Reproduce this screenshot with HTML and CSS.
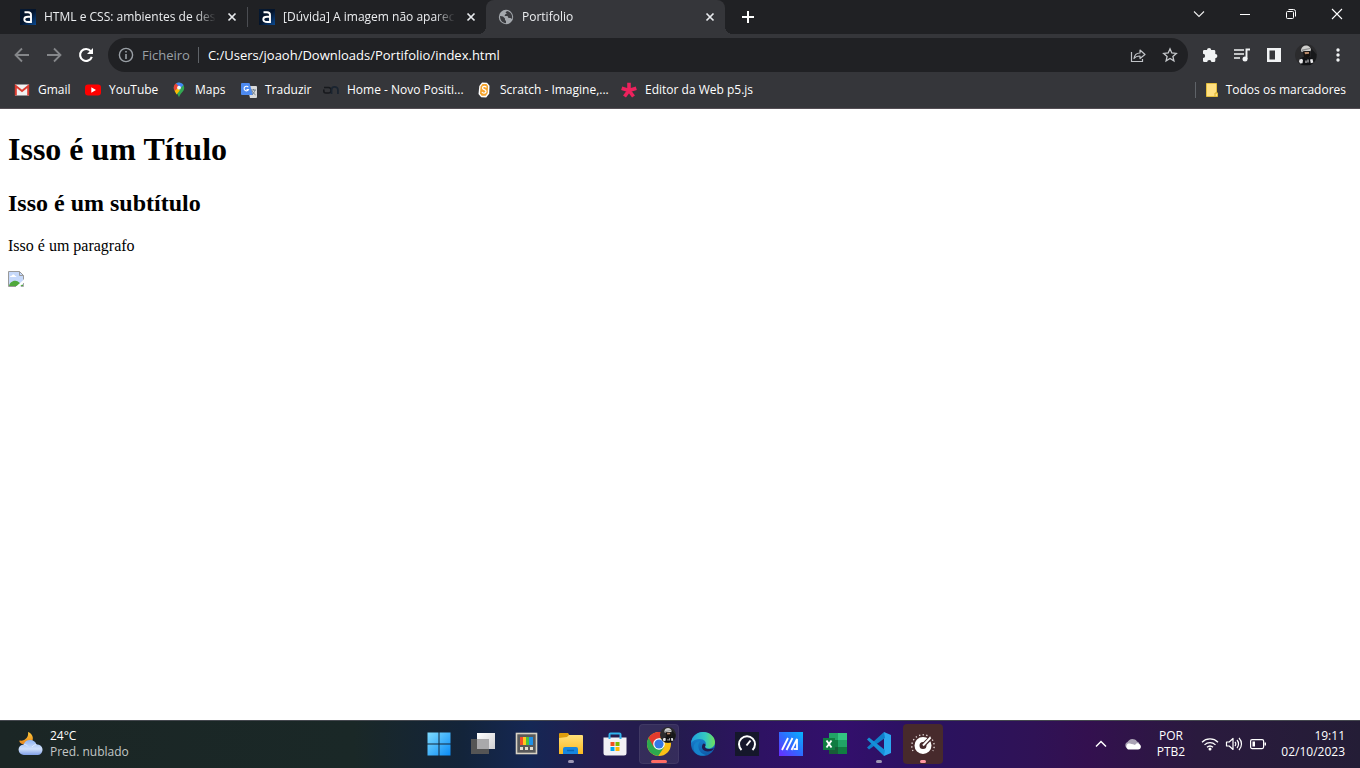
FILE: index.html
```html
<!DOCTYPE html>
<html lang="pt">
<head>
<meta charset="utf-8">
<title>Portifolio</title>
<link rel="stylesheet" href="styles.css">
</head>
<body>
<svg class="defs" width="0" height="0" aria-hidden="true">
  <defs>
    <linearGradient id="alura" x1="0" y1="0" x2="1" y2="1"><stop offset="0" stop-color="#051933"/><stop offset=".5" stop-color="#04142b"/><stop offset="1" stop-color="#0a4a94"/></linearGradient>
    <linearGradient id="win" x1="0" y1="0" x2="1" y2="1"><stop offset="0" stop-color="#7fdcff"/><stop offset="1" stop-color="#0a8bf5"/></linearGradient>
    <linearGradient id="folder" x1="0" y1="0" x2="0" y2="1"><stop offset="0" stop-color="#ffe07a"/><stop offset="1" stop-color="#fbb91f"/></linearGradient>
    <linearGradient id="cloud" x1="0" y1="0" x2="0" y2="1"><stop offset="0" stop-color="#8fb4f2"/><stop offset=".6" stop-color="#cfe0fb"/><stop offset="1" stop-color="#7f9fe6"/></linearGradient>
    <linearGradient id="moon" x1="0" y1="0" x2="0" y2="1"><stop offset="0" stop-color="#ffc83a"/><stop offset="1" stop-color="#e8861b"/></linearGradient>
    <linearGradient id="edgeTop" x1="0" y1="0" x2="1" y2="0"><stop offset="0" stop-color="#1f9fe0"/><stop offset=".6" stop-color="#35c8c0"/><stop offset="1" stop-color="#6fe05a"/></linearGradient>
    <linearGradient id="edgeLow" x1="0" y1="0" x2="0" y2="1"><stop offset="0" stop-color="#1b8fdc"/><stop offset="1" stop-color="#0f59a8"/></linearGradient>
    <linearGradient id="asus" x1="0" y1="1" x2="1" y2="0"><stop offset="0" stop-color="#6a2bff"/><stop offset=".5" stop-color="#2f6bff"/><stop offset="1" stop-color="#05b4ff"/></linearGradient>
    <linearGradient id="sheet" x1="0" y1="0" x2="1" y2="1"><stop offset="0" stop-color="#ffffff"/><stop offset="1" stop-color="#cfcfd2"/></linearGradient>
    <symbol id="avatar" viewBox="0 0 22 22">
      <circle cx="11" cy="11" r="11" fill="#2b2b2d"/>
      <path d="M16 4l5.500 6.500A11 11 0 0 1 15 21z" fill="#17181a"/>
      <path d="M6 6c.5-3 2.500-4.500 5-4.500S16 3.500 16 6l-1 1.500L10 7 6.500 8z" fill="#cfcfcd"/>
      <path d="M7 5.500l8-1.500v1L7 7z" fill="#8b8c8c"/>
      <path d="M8 7.500l7-.5v5l-3 2.500L9 13z" fill="#15110f"/>
      <path d="M9.500 8h4.500v1.800l-4 .4z" fill="#b98a6a"/>
      <path d="M4 19c0-4 2-5.500 5-6l3 1.500 2-1.500c3 .8 4 3 4 6l-3 2H7z" fill="#101114"/>
      <path d="M4.500 15.500l2.500-.8 1 1.500-.5 3-2.500.3-1-2zM10.500 16.500h1v2.500h-1zM15 15.500l2.500-.5.8 3.500-2.500.8zM12.500 15.500l1 0 0 3-1 0z" fill="#e8e8ea"/>
    </symbol>
    <symbol id="a-logo" viewBox="0 0 16 16">
      <rect width="16" height="16" fill="url(#alura)"/>
      <path d="M4.500 3.300H8c2.200 0 3 1 3 2.800V13H8.500C5.800 13 4.300 12.200 4.300 10.200S5.800 7.700 8 7.700h3" fill="none" stroke="#fff" stroke-width="1.900"/>
    </symbol>
    <symbol id="x" viewBox="0 0 16 16"><path d="M4.500 4.500l7 7m0-7l-7 7" fill="none" stroke="currentColor" stroke-width="1.700"/></symbol>
  </defs>
</svg>

<header class="browser">
  <div class="tabstrip">
    <div class="tabs">
      <div class="tab">
        <button class="tab-main"><svg width="16" height="16"><use href="#a-logo"/></svg><span class="tab-title">HTML e CSS: ambientes de dese</span></button>
        <button class="tab-close" aria-label="Fechar"><svg width="16" height="16"><use href="#x"/></svg></button>
      </div>
      <div class="tab tab-divided">
        <button class="tab-main"><svg width="16" height="16"><use href="#a-logo"/></svg><span class="tab-title">[Dúvida] A imagem não aparece,</span></button>
        <button class="tab-close" aria-label="Fechar"><svg width="16" height="16"><use href="#x"/></svg></button>
      </div>
      <div class="tab tab-active">
        <button class="tab-main"><svg width="16" height="16" viewBox="0 0 16 16"><circle cx="8" cy="8" r="7.200" fill="#a4a8ad"/><path d="M2 7l3 .500 2 2v1.500l1 1v2.200C4.500 14 2 11.500 2 7zM9 2l-1.500 1.500L9 5H7.500L6.500 7h3l1 2h2l1.500 1c.8-4-1.200-7.200-5-8z" fill="#3a3b3f"/></svg><span class="tab-title">Portifolio</span></button>
        <button class="tab-close" aria-label="Fechar"><svg width="16" height="16"><use href="#x"/></svg></button>
      </div>
    </div>
    <button class="new-tab" aria-label="Novo separador"><svg width="16" height="16" viewBox="0 0 16 16"><path d="M8 2v12M2 8h12" stroke="#fff" stroke-width="2"/></svg></button>
    <div class="window-controls">
      <button aria-label="Pesquisar separadores"><svg width="12" height="12" viewBox="0 0 12 12"><path d="M1 3.500l5 5 5-5" fill="none" stroke="#eee" stroke-width="1.100"/></svg></button>
      <button aria-label="Minimizar"><svg width="12" height="12" viewBox="0 0 12 12"><path d="M1 6.500h10" stroke="#fff"/></svg></button>
      <button aria-label="Restaurar"><svg width="12" height="12" viewBox="0 0 12 12"><rect x="1.500" y="3.500" width="7" height="7" rx="1" fill="none" stroke="#fff"/><path d="M3.500 1.500h5a2 2 0 0 1 2 2v5" fill="none" stroke="#fff"/></svg></button>
      <button aria-label="Fechar janela"><svg width="12" height="12" viewBox="0 0 12 12"><path d="M1 1l10 10M11 1L1 11" stroke="#fff" stroke-width="1.100"/></svg></button>
    </div>
  </div>

  <div class="toolbar">
    <button class="tool dim" aria-label="Recuar"><svg width="16" height="16" viewBox="0 0 16 16"><path d="M15 8H2M8 1.500L1.500 8 8 14.500" fill="none" stroke="currentColor" stroke-width="1.800"/></svg></button>
    <button class="tool dim" aria-label="Avançar"><svg width="16" height="16" viewBox="0 0 16 16"><path d="M1 8h13M8 1.500L14.500 8 8 14.500" fill="none" stroke="currentColor" stroke-width="1.800"/></svg></button>
    <button class="tool" aria-label="Recarregar"><svg width="16" height="16" viewBox="0 0 16 16"><path d="M12.800 4.200A6 6 0 1 0 13.800 9.800" fill="none" stroke="#fff" stroke-width="2.100"/><path d="M15 1v6H9z" fill="#fff"/></svg></button>
    <div class="omnibox">
      <svg width="16" height="16" viewBox="0 0 16 16"><circle cx="8" cy="8" r="6.600" fill="none" stroke="#9aa0a6" stroke-width="1.400"/><path d="M8 4v1.600M8 7v5" stroke="#9aa0a6" stroke-width="1.600"/></svg>
      <label class="scheme" for="url">Ficheiro</label>
      <input id="url" class="url" type="text" value="C:/Users/joaoh/Downloads/Portifolio/index.html">
      <button class="tool" aria-label="Partilhar"><svg width="16" height="16" viewBox="0 0 16 16"><path d="M1.500 5v9.500h11V12" fill="none" stroke="#c0c3c7" stroke-width="1.200"/><path d="M4 11.500c.5-4 2.500-5.500 6-5.500V3l5 4.500-5 4V9c-3 0-4.500.5-6 2.500z" fill="none" stroke="#c0c3c7" stroke-width="1.200" stroke-linejoin="round"/></svg></button>
      <button class="tool" aria-label="Marcar"><svg width="16" height="16" viewBox="0 0 16 16"><path d="M8 1.800l1.800 4.200 4.500.4-3.400 3 1 4.400L8 11.500l-3.900 2.300 1-4.400-3.400-3 4.500-.4z" fill="none" stroke="#c6c9cc" stroke-width="1.300"/></svg></button>
    </div>
    <div class="extensions">
      <button class="tool" aria-label="Extensões"><svg width="16" height="16" viewBox="0 0 16 16"><path d="M5 3a2 2 0 0 1 4.200 0H12a1.300 1.300 0 0 1 1.300 1.300V7a2 2 0 0 1 0 4.200v2.500A1.300 1.300 0 0 1 12 15H9.400a2 2 0 0 0-4.200 0H2.300A1.300 1.300 0 0 1 1 13.700V11a2 2 0 0 0 0-4.200V4.300A1.300 1.300 0 0 1 2.300 3z" fill="#f1f3f4"/></svg></button>
      <button class="tool" aria-label="Multimédia"><svg width="18" height="16" viewBox="0 0 18 16"><path d="M1 3h10M1 7h10M1 11h6" stroke="#f1f3f4" stroke-width="1.700"/><path d="M13.500 12V2.500H17" fill="none" stroke="#f1f3f4" stroke-width="1.900"/><circle cx="12" cy="12" r="2.500" fill="#f1f3f4"/></svg></button>
      <button class="tool" aria-label="Painel lateral"><svg width="16" height="16" viewBox="0 0 16 16"><path d="M1 1h14v14H1zM3.500 3.500v9H9v-9z" fill="#f1f3f4" fill-rule="evenodd"/></svg></button>
      <button class="tool" aria-label="Perfil"><svg width="22" height="22"><use href="#avatar"/></svg></button>
      <button class="tool" aria-label="Menu"><svg width="16" height="16" viewBox="0 0 16 16"><g fill="#f1f3f4"><circle cx="8" cy="3" r="1.700"/><circle cx="8" cy="8" r="1.700"/><circle cx="8" cy="13" r="1.700"/></g></svg></button>
    </div>
  </div>

  <nav class="bookmarks">
    <a href="#"><svg width="16" height="16" viewBox="0 0 16 16"><path d="M1 2.500h14v11H1z" fill="#f1f1f1"/><path d="M1.800 13.500V4L8 9l6.200-5v9.500" fill="none" stroke="#dc3b30" stroke-width="2"/></svg>Gmail</a>
    <a href="#"><svg width="16" height="16" viewBox="0 0 16 16"><rect y="2.500" width="16" height="11" rx="3" fill="#f00"/><path d="M6.300 5.300v5.400L11 8z" fill="#fff"/></svg>YouTube</a>
    <a href="#"><svg width="16" height="16" viewBox="0 0 16 16"><path d="M8 .5a5.200 5.200 0 0 0-5.200 5.200C2.800 10 7 11 8 15.500 9 11 13.200 10 13.200 5.700A5.200 5.200 0 0 0 8 .5z" fill="#34a853"/><path d="M5 1.500A5.200 5.200 0 0 1 12.500 3.100L6 10z" fill="#4285f4"/><path d="M5 1.500L8.500 5l-4 4.500C2 7.500 2 3.500 5 1.500z" fill="#ea4335"/><path d="M3.700 9L6.800 6l2 2.500-3.300 4z" fill="#fbbc04"/><circle cx="8" cy="5.700" r="1.900" fill="#f5f5f5"/></svg>Maps</a>
    <a href="#"><svg width="16" height="16" viewBox="0 0 16 16"><path d="M6 4h9a1 1 0 0 1 1 1v10a1 1 0 0 1-1 1H9z" fill="#d9dadb"/><path d="M1 1h7.500L12 13H1a1 1 0 0 1-1-1V2a1 1 0 0 1 1-1z" fill="#4d8af0"/><path d="M7.300 5.200A2.300 2.300 0 1 0 7.500 7.500H5.500" fill="none" stroke="#fff" stroke-width="1.100"/><path d="M10 8h5M12.500 7v1M14 8c-.5 2-1.500 3.500-3 4.500M11 9c.8 1.500 2 3 3.500 3.800" fill="none" stroke="#657581" stroke-width=".9"/></svg>Traduzir</a>
    <a href="#"><svg width="16" height="16" viewBox="0 0 16 16"><path d="M1 5.500h4.500a2.500 2.500 0 0 1 2.500 2.700 2.500 2.500 0 0 1-2.500 2.800H2.800A2 2 0 0 1 .8 9V7.500" fill="none" stroke="#17191d" stroke-width="1.600"/><path d="M8.500 12V8a3.200 3.200 0 0 1 6.400 0V12" fill="none" stroke="#1a2430" stroke-width="1.800"/></svg>Home - Novo Positi...</a>
    <a href="#"><svg width="16" height="16" viewBox="0 0 16 16"><path d="M6 .5l5 .2 2.500 3-.3 8-3 3.800-5-.2L2.500 12l.8-8z" fill="#fff"/><path d="M6.500 2h4l1.500 2-.3 7-2 2.800h-4L4 11.500l.6-7z" fill="#f5a32c"/><path d="M10.300 5.500c-.3-1.500-3.700-1.500-3.800.5 0 2 3.600 1.400 3.500 3.600-.2 2-3.500 2-4 .2" fill="none" stroke="#fff" stroke-width="1.300"/></svg>Scratch - Imagine,...</a>
    <a href="#"><svg width="16" height="16" viewBox="0 0 16 16"><path d="M8 8.500V.8M8 8.500l7.300-2.300M8 8.500l4.500 6M8 8.500l-4.500 6M8 8.500L.7 6.200" stroke="#ed225d" stroke-width="3.600"/></svg>Editor da Web p5.js</a>
    <a href="#" class="all-bookmarks"><svg width="16" height="16" viewBox="0 0 16 16"><path d="M2.500 1.500h10v9.500h1v3.500h-11z" fill="#ffe082" stroke="#e3bd3d"/><path d="M11 14.500V11h2.500" fill="none" stroke="#d9b02d"/></svg>Todos os marcadores</a>
  </nav>
</header>

<main class="page">
  <h1>Isso é um Título</h1>
  <h2>Isso é um subtítulo</h2>
  <p>Isso é um paragrafo</p>
  <svg class="broken" width="16" height="16" viewBox="0 0 16 16" role="img" aria-label="Imagem"><path d="M.5.500h11l4 4v11H.5z" fill="#c6d9fb"/><path d="M2 6c0-1 1-1.500 1.800-1.300C4.300 3 6.800 3 7 5c1 0 1.500.5 1.500 1z" fill="#fff"/><path d="M1 15c.5-3 3.500-5.500 6.500-5.200 3 .2 4.500 3 7.500 4.200v1z" fill="#50a83c"/><path d="M16 8.500L7.500 16H11l5-4z" fill="#fff"/><path d="M8 15.500H.5V.5h11l4 4v4M11.500.5v4h4" fill="none" stroke="#9a9a9a"/><path d="M13 15.500h2.500V12" fill="none" stroke="#aaa"/></svg>
</main>

<footer class="taskbar">
  <button class="weather">
    <svg width="26" height="26" viewBox="0 0 26 26"><path d="M10 1c5 1.500 7 8 2 12H4c-2-1-3-2.500-2.500-3.500C7 10.500 11 6 10 1z" fill="url(#moon)"/><path d="M6 24a5.300 5.300 0 0 1-.3-10.600A6.800 6.800 0 0 1 18.500 13.500 5.300 5.300 0 0 1 20 24z" fill="url(#cloud)"/><path d="M5.700 13.400c2 0 3.300.7 4.300 2M18.500 13.500c-2 .2-3.500 1-4.500 2.500" fill="none" stroke="#e3edff" stroke-width=".8"/></svg>
    <span class="stack"><span>24°C</span><span class="muted">Pred. nublado</span></span>
  </button>

  <div class="apps">
    <button class="app" aria-label="Iniciar"><svg width="24" height="24" viewBox="0 0 24 24"><path d="M.5.500h11v11H.5zM12.500.500h11v11h-11zM.5 12.500h11v11H.5zM12.500 12.500h11v11h-11z" fill="url(#win)"/></svg></button>
    <button class="app" aria-label="Vista de tarefas"><svg width="24" height="24" viewBox="0 0 24 24"><rect x="6" y="1" width="18" height="16" fill="url(#sheet)"/><rect y="7" width="18" height="15" fill="#555"/><rect x="6" y="7" width="12" height="10" fill="#a9a9ab"/></svg></button>
    <button class="app" aria-label="PowerToys"><svg width="24" height="24" viewBox="0 0 24 24"><rect x="1.500" y="1.500" width="20" height="20" fill="#58595b" stroke="#d8d2c4" stroke-width="1.600"/><path d="M5 5h3v8H5z" fill="#f04c2a"/><path d="M8 5h3v8H8z" fill="#ffc81e"/><path d="M11 5h3v8h-3z" fill="#4bc43c"/><path d="M14 5h4v8h-4z" fill="#1f91e8"/><path d="M5 15h3v3H5zM10 15h3v3h-3zM15 15h3v3h-3z" fill="#e3ddd0"/></svg></button>
    <button class="app running" aria-label="Explorador"><svg width="24" height="24" viewBox="0 0 24 24"><path d="M0 2a1 1 0 0 1 1-1h8l2 3v3H0z" fill="#dd9c0c"/><path d="M0 6l8-1 2-2h13a1 1 0 0 1 1 1v18H0z" fill="url(#folder)"/><path d="M4 22v-5a2 2 0 0 1 2-2h11a2 2 0 0 1 2 2v5z" fill="#1686e0"/><path d="M8 18.500h7" stroke="#0864b5" stroke-width="1.500"/></svg></button>
    <button class="app" aria-label="Microsoft Store"><svg width="24" height="24" viewBox="0 0 24 24"><path d="M.5 5.500h23V21a2.500 2.500 0 0 1-2.500 2.500H3A2.500 2.500 0 0 1 .5 21z" fill="#f2f1f4"/><path d="M6.500 7V2.500a1 1 0 0 1 1-1h9a1 1 0 0 1 1 1V7" fill="none" stroke="#31b4ed" stroke-width="2"/><path d="M7.500 10h4v4h-4z" fill="#f25022"/><path d="M12.500 10h4v4h-4z" fill="#7fba00"/><path d="M7.500 15h4v4h-4z" fill="#00a4ef"/><path d="M12.500 15h4v4h-4z" fill="#ffb900"/></svg></button>
    <button class="app current" aria-label="Google Chrome"><svg width="24" height="24" viewBox="0 0 24 24"><circle cx="12" cy="12" r="12" fill="#fbc116"/><path d="M12 12L1.600 6a12 12 0 0 0 9.600 18l6-9z" fill="#2da94f"/><path d="M1.600 6A12 12 0 0 1 22.400 6H12v6l-5.200 3z" fill="#e33b2e"/><circle cx="12" cy="12" r="5.800" fill="#fff"/><circle cx="12" cy="12" r="4.600" fill="#3478e6"/></svg><svg class="app-badge" width="16" height="16"><use href="#avatar"/></svg></button>
    <button class="app" aria-label="Microsoft Edge"><svg width="24" height="24" viewBox="0 0 24 24"><circle cx="12" cy="12" r="12" fill="url(#edgeLow)"/><path d="M0 11C1 4 6 0 12 0c7 0 12 5 12 10 0 4-3 6.500-6.500 6.500-3 0-4-1.500-3-3C16 10 13 7 9 7c-4 0-7 1.500-9 4z" fill="url(#edgeTop)"/><path d="M9.500 9C5 13 8 22 15 23c-6 2-12-1-12.500-6.500C2.300 12 5 9 9.500 9z" fill="#1683cc"/><path d="M14.500 13.500C13 15.500 15 17 18 17c2 0 4-.5 5-1.500-.3 1.500-1.500 2.700-2.500 3.200C17 20 13 19.500 11.500 17c-1-2-.5-4.500 1-5.500 1.500 0 2.200 1 2 2z" fill="#211c50"/></svg></button>
    <button class="app" aria-label="Speedtest"><svg width="24" height="24" viewBox="0 0 24 24"><rect width="24" height="24" fill="#15172b"/><path d="M6.500 18a8 8 0 1 1 11 0" fill="none" stroke="#fff" stroke-width="2"/><path d="M11.500 13.500l4-5" stroke="#fff" stroke-width="2"/></svg></button>
    <button class="app" aria-label="MyASUS"><svg width="24" height="24" viewBox="0 0 24 24"><rect width="24" height="24" fill="url(#asus)"/><path d="M3 18L9 6M7.500 18l6-12M12.500 18L18 7v11" fill="none" stroke="#fff" stroke-width="1.800"/><path d="M14.500 17H18" stroke="#fff" stroke-width="1.800"/></svg></button>
    <button class="app" aria-label="Excel"><svg width="24" height="24" viewBox="0 0 24 24"><path d="M6 1h9v7H6z" fill="#21a366"/><path d="M15 1h9v7h-9z" fill="#33c481"/><path d="M6 8h9v7H6z" fill="#107c41"/><path d="M15 8h9v7h-9z" fill="#21a366"/><path d="M6 15h18v7H6z" fill="#185c37"/><path d="M15 15h9v7h-9z" fill="#107c41"/><rect y="6" width="12" height="12" fill="#107c41"/><path d="M3.500 8.500l5 7M8.500 8.500l-5 7" stroke="#fff" stroke-width="1.900"/></svg></button>
    <button class="app running" aria-label="Visual Studio Code"><svg width="24" height="24" viewBox="0 0 24 24"><path d="M17 0l7 3v18l-7 3z" fill="#2ba7ef"/><path d="M17 0L0 15.500l2 2L18 6z" fill="#0f7fcb"/><path d="M0 7.500l2-2L18 18l-1 6z" fill="#1590d9"/></svg></button>
    <button class="app alert" aria-label="Armoury"><svg width="24" height="24" viewBox="0 0 24 24"><circle cx="12" cy="13.500" r="6" fill="none" stroke="#fff" stroke-width="5"/><path d="M12.500 13L20 5.500" stroke="#472a2c" stroke-width="4.500"/><path d="M12 13.500L19.500 5.500" stroke="#fff" stroke-width="2"/><path d="M2 19A11.200 11.200 0 1 1 22 19" fill="none" stroke="#e8dedd" stroke-width="1.300" stroke-dasharray="1.300 2.400"/></svg></button>
  </div>

  <div class="tray">
    <button class="tray-item" aria-label="Mostrar ícones ocultos"><svg width="12" height="12" viewBox="0 0 12 12"><path d="M1 8.500l5-5 5 5" fill="none" stroke="#fff" stroke-width="1.500"/></svg></button>
    <button class="tray-item" aria-label="OneDrive"><svg width="18" height="12" viewBox="0 0 18 12"><path d="M3 10a3.300 3.300 0 0 1 .5-6A5.500 5.500 0 0 1 13 3.500c2 .5 3 2 2 5z" fill="#aaa3b5"/><path d="M4 11.500A3.500 3.500 0 0 1 4 5.500c3 0 4 .5 7 1.500 1-1.500 2-2 3.500-1.500 3.500 1.500 3 6-.5 6z" fill="#fff"/></svg></button>
    <button class="stack lang"><span>POR</span><span>PTB2</span></button>
    <button class="status" aria-label="Rede, som e bateria">
      <svg width="18" height="16" viewBox="0 0 18 16"><g fill="none" stroke="#fff" stroke-width="1.300"><path d="M1 6.200a11.500 11.500 0 0 1 16 0M3.500 8.900a8 8 0 0 1 11 0M6 11.300a4.500 4.500 0 0 1 6 0"/></g><circle cx="9" cy="13" r="1.500" fill="#fff"/></svg>
      <svg width="18" height="16" viewBox="0 0 18 16"><g fill="none" stroke="#fff" stroke-width="1.200"><path d="M1.500 6h2.700L8 2.500v11L4.200 10H1.500z" stroke-linejoin="round"/><path d="M10 6c1 1 1 3 0 4M12 4c2 2.200 2 5.800 0 8M14 2c3.300 3.500 3.300 8.500 0 12"/></g></svg>
      <svg width="18" height="16" viewBox="0 0 18 16"><rect x="1.600" y="3.600" width="13" height="9" rx="1.500" fill="none" stroke="#fff" stroke-width="1.200"/><path d="M3.500 5.500H6v5H3.500zM15.500 6.500H17v3h-1.500z" fill="#fff"/></svg>
    </button>
    <button class="stack clock"><span>19:11</span><span>02/10/2023</span></button>
  </div>
</footer>
</body>
</html>
```
FILE: styles.css
```css
* { box-sizing: border-box; }

body {
  margin: 0;
  min-height: 100vh;
  display: flex;
  flex-direction: column;
  background: #fff;
  font-family: "Liberation Serif", serif;
}

svg { display: block; flex: none; }
.defs { position: absolute; }

button {
  margin: 0;
  padding: 0;
  border: 0;
  background: none;
  color: inherit;
  font: inherit;
  display: flex;
  align-items: center;
  justify-content: center;
}

.browser,
.taskbar {
  font-family: "Open Sans", "Noto Sans", sans-serif;
  font-size: 12px;
  line-height: 16px;
  color: #fff;
}

.browser {
  background: #35363a;
  border-bottom: 1px solid #544e54;
}

/* Tab strip */
.tabstrip {
  display: flex;
  height: 34px;
  padding-left: 8px;
  background: #202124;
}

.tabs { display: flex; flex: 0 1 717px; min-width: 0; }

.tab {
  position: relative;
  display: flex;
  flex: 1 1 0;
  min-width: 0;
  align-items: center;
  padding: 0 7px 0 12px;
}

.tab-main {
  flex: 1;
  min-width: 0;
  gap: 8px;
  justify-content: flex-start;
}

.tab-title {
  flex: 1;
  min-width: 0;
  overflow: hidden;
  white-space: nowrap;
  text-align: left;
  color: #eceef0;
  -webkit-mask-image: linear-gradient(to left, transparent, #000 20px);
  mask-image: linear-gradient(to left, transparent, #000 20px);
}

.tab-close { padding-left: 8px; color: #e8eaed; }
.tab-divided::before {
  content: "";
  position: absolute;
  left: 0;
  top: 7px;
  bottom: 7px;
  width: 1px;
  background: #4b4d52;
}

.tab-active { background: #35363a; border-radius: 8px 8px 0 0; }
.tab-active::before,
.tab-active::after {
  content: "";
  position: absolute;
  bottom: 0;
  width: 8px;
  height: 8px;
}
.tab-active::before { right: 100%; background: radial-gradient(circle at 0 0, #202124 8px, #35363a 8px); }
.tab-active::after { left: 100%; background: radial-gradient(circle at 100% 0, #202124 8px, #35363a 8px); }

.new-tab { width: 46px; }
.window-controls { display: flex; margin-left: auto; padding-bottom: 6px; }
.window-controls button { width: 46px; }

/* Address row */
.toolbar {
  display: flex;
  align-items: center;
  padding: 4px 6px 0;
}

.tool { width: 32px; height: 32px; flex: none; }
.dim { color: #85878a; }

.omnibox {
  display: flex;
  flex: 1;
  min-width: 0;
  align-items: center;
  height: 34px;
  margin-left: 6px;
  padding: 0 2px 0 10px;
  border-radius: 17px;
  background: #202124;
  font-size: 13px;
}

.scheme {
  margin-left: 8px;
  padding-right: 8px;
  border-right: 1px solid #5f6368;
  color: #9aa0a6;
}

.url {
  flex: 1;
  min-width: 0;
  padding: 0 0 0 9px;
  border: 0;
  outline: 0;
  background: none;
  color: #fff;
  font: inherit;
}

.extensions { display: flex; padding-left: 6px; }

/* Bookmarks bar */
.bookmarks {
  display: grid;
  grid-template-columns: 71px 86px 70px 82px 153px 145px 1fr auto;
  align-items: center;
  height: 36px;
  padding: 0 14px;
}

.bookmarks a {
  display: flex;
  align-items: center;
  gap: 8px;
  color: #fff;
  text-decoration: none;
  white-space: nowrap;
}

.bookmarks .all-bookmarks { gap: 6px; padding-left: 8px; border-left: 1px solid #5f6368; }

/* Document */
.page { flex: 1; padding: 0 8px 8px; color: #000; }
h1 { margin: 22px 0; font-size: 32px; line-height: 36px; }
h2 { margin: 0 0 20px; font-size: 24px; line-height: 28px; }
p { margin: 0 0 16px; font-size: 16px; line-height: 18px; }

/* Taskbar */
.taskbar {
  display: grid;
  grid-template-columns: 1fr auto 1fr;
  align-items: center;
  height: 48px;
  padding-left: 2px;
  box-shadow: inset 0 1px #45484f;
  background: linear-gradient(90deg, #1b2625 0%, #1a2827 26%, #13243a 34%, #152754 39%, #251c50 44%, #231c4c 49%, #2e1263 56%, #330f6c 62%, #2a1260 68%, #2f1256 76%, #33104f 80%, #2a1a3e 88%, #241d36 100%);
}

.stack { display: flex; flex-direction: column; }
.weather { justify-self: start; padding-left: 16px; gap: 6px; }
.weather .stack { align-items: flex-start; }
.muted { color: #c3c7c6; }

.apps { display: flex; gap: 4px; }
.app {
  position: relative;
  width: 40px;
  height: 40px;
  border-radius: 4px;
}
.app-badge { position: absolute; top: 3px; right: 3px; }
.current { background: rgba(255, 255, 255, 0.08); box-shadow: inset 0 0 0 1px rgba(255, 255, 255, 0.06); }
.alert { background: #472a2c; }

.running::after,
.current::after,
.alert::after {
  content: "";
  position: absolute;
  bottom: 1px;
  left: 50%;
  width: 6px;
  height: 3px;
  margin-left: -3px;
  border-radius: 2px;
  background: #9c97b4;
}
.current::after { width: 16px; margin-left: -8px; background: #ff6b63; }
.alert::after { background: #ff99a2; }

.tray { display: flex; justify-self: end; align-items: center; padding-right: 15px; }
.tray-item { width: 32px; }
.lang { width: 44px; align-items: center; }
.status { gap: 6px; padding: 0 8px; }
.clock { width: 70px; align-items: flex-end; }
```
